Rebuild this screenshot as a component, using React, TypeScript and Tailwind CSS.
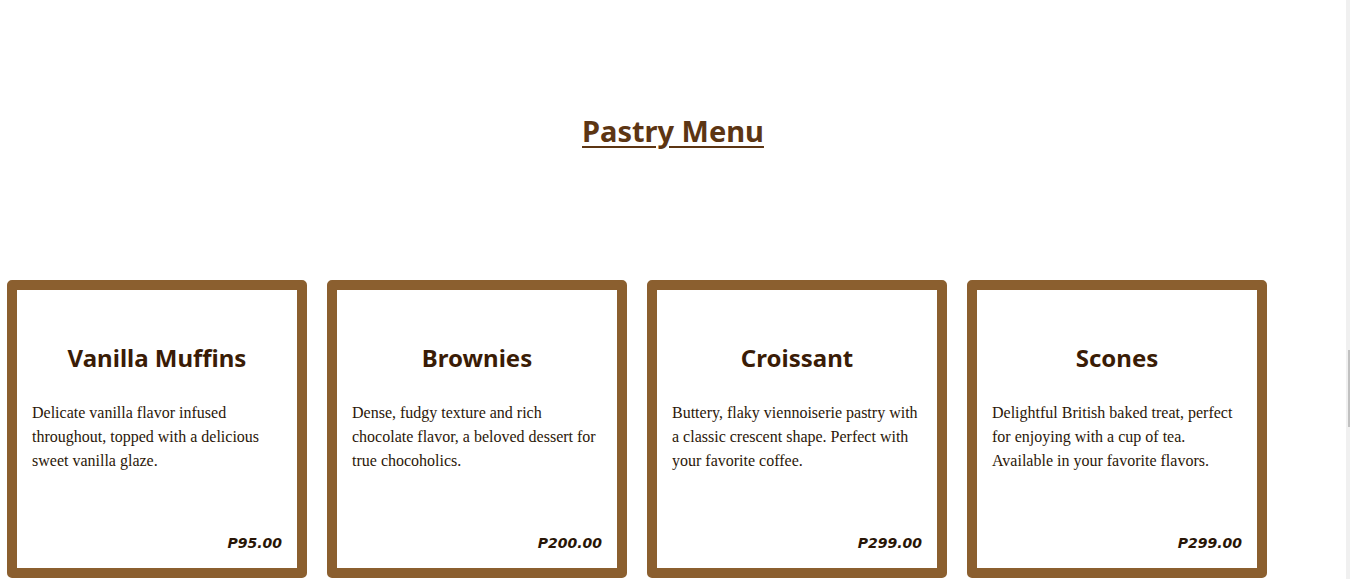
const pastries = [
  {
    name: "Vanilla Muffins",
    desc: "Delicate vanilla flavor infused throughout, topped with a delicious sweet vanilla glaze.",
    price: "P95.00",
  },
  {
    name: "Brownies",
    desc: "Dense, fudgy texture and rich chocolate flavor, a beloved dessert for true chocoholics.",
    price: "P200.00",
  },
  {
    name: "Croissant",
    desc: "Buttery, flaky viennoiserie pastry with a classic crescent shape. Perfect with your favorite coffee.",
    price: "P299.00",
  },
  {
    name: "Scones",
    desc: "Delightful British baked treat, perfect for enjoying with a cup of tea. Available in your favorite flavors.",
    price: "P299.00",
  },
]

const comic = "font-['Comic_Sans_MS','Noto_Sans',sans-serif]"

export default function App() {
  return (
    <div className="flex h-[579px] w-full overflow-hidden bg-white">
      <div className="flex-1">
        {/* Heading */}
        <div className="flex h-[280px] items-start justify-center pt-[111px]">
          <h1 className={`${comic} text-[29px] font-bold leading-[40px] text-[#5c3513] underline underline-offset-[4px]`}>
            Pastry Menu
          </h1>
        </div>

        {/* Cards */}
        <div className="flex gap-[20px] pl-[7px]">
          {pastries.map((p) => (
            <div
              key={p.name}
              className="flex h-[298px] w-[300px] flex-col rounded-[5px] border-[10px] border-[#8b5f2f] bg-white px-[15px] pb-[15px] pt-[53px]"
            >
              <h2 className={`${comic} text-center text-[24px] font-bold leading-[30px] text-[#3a1c06]`}>
                {p.name}
              </h2>
              <p className="mt-[28px] font-['Liberation_Serif','Times_New_Roman',serif] text-[16px] leading-[24px] text-[#2b1708]">
                {p.desc}
              </p>
              <p className="mt-auto text-right font-['DejaVu_Sans',sans-serif] text-[14px] font-bold italic leading-[20px] text-[#2a1606]">
                {p.price}
              </p>
            </div>
          ))}
        </div>
      </div>

      {/* scrollbar */}
      <div className="flex w-[4px] flex-col items-end bg-[#f0f0f0]">
        <div className="mt-[350px] h-[77px] w-[2px] bg-[#c1c1c1]" />
      </div>
    </div>
  )
}
